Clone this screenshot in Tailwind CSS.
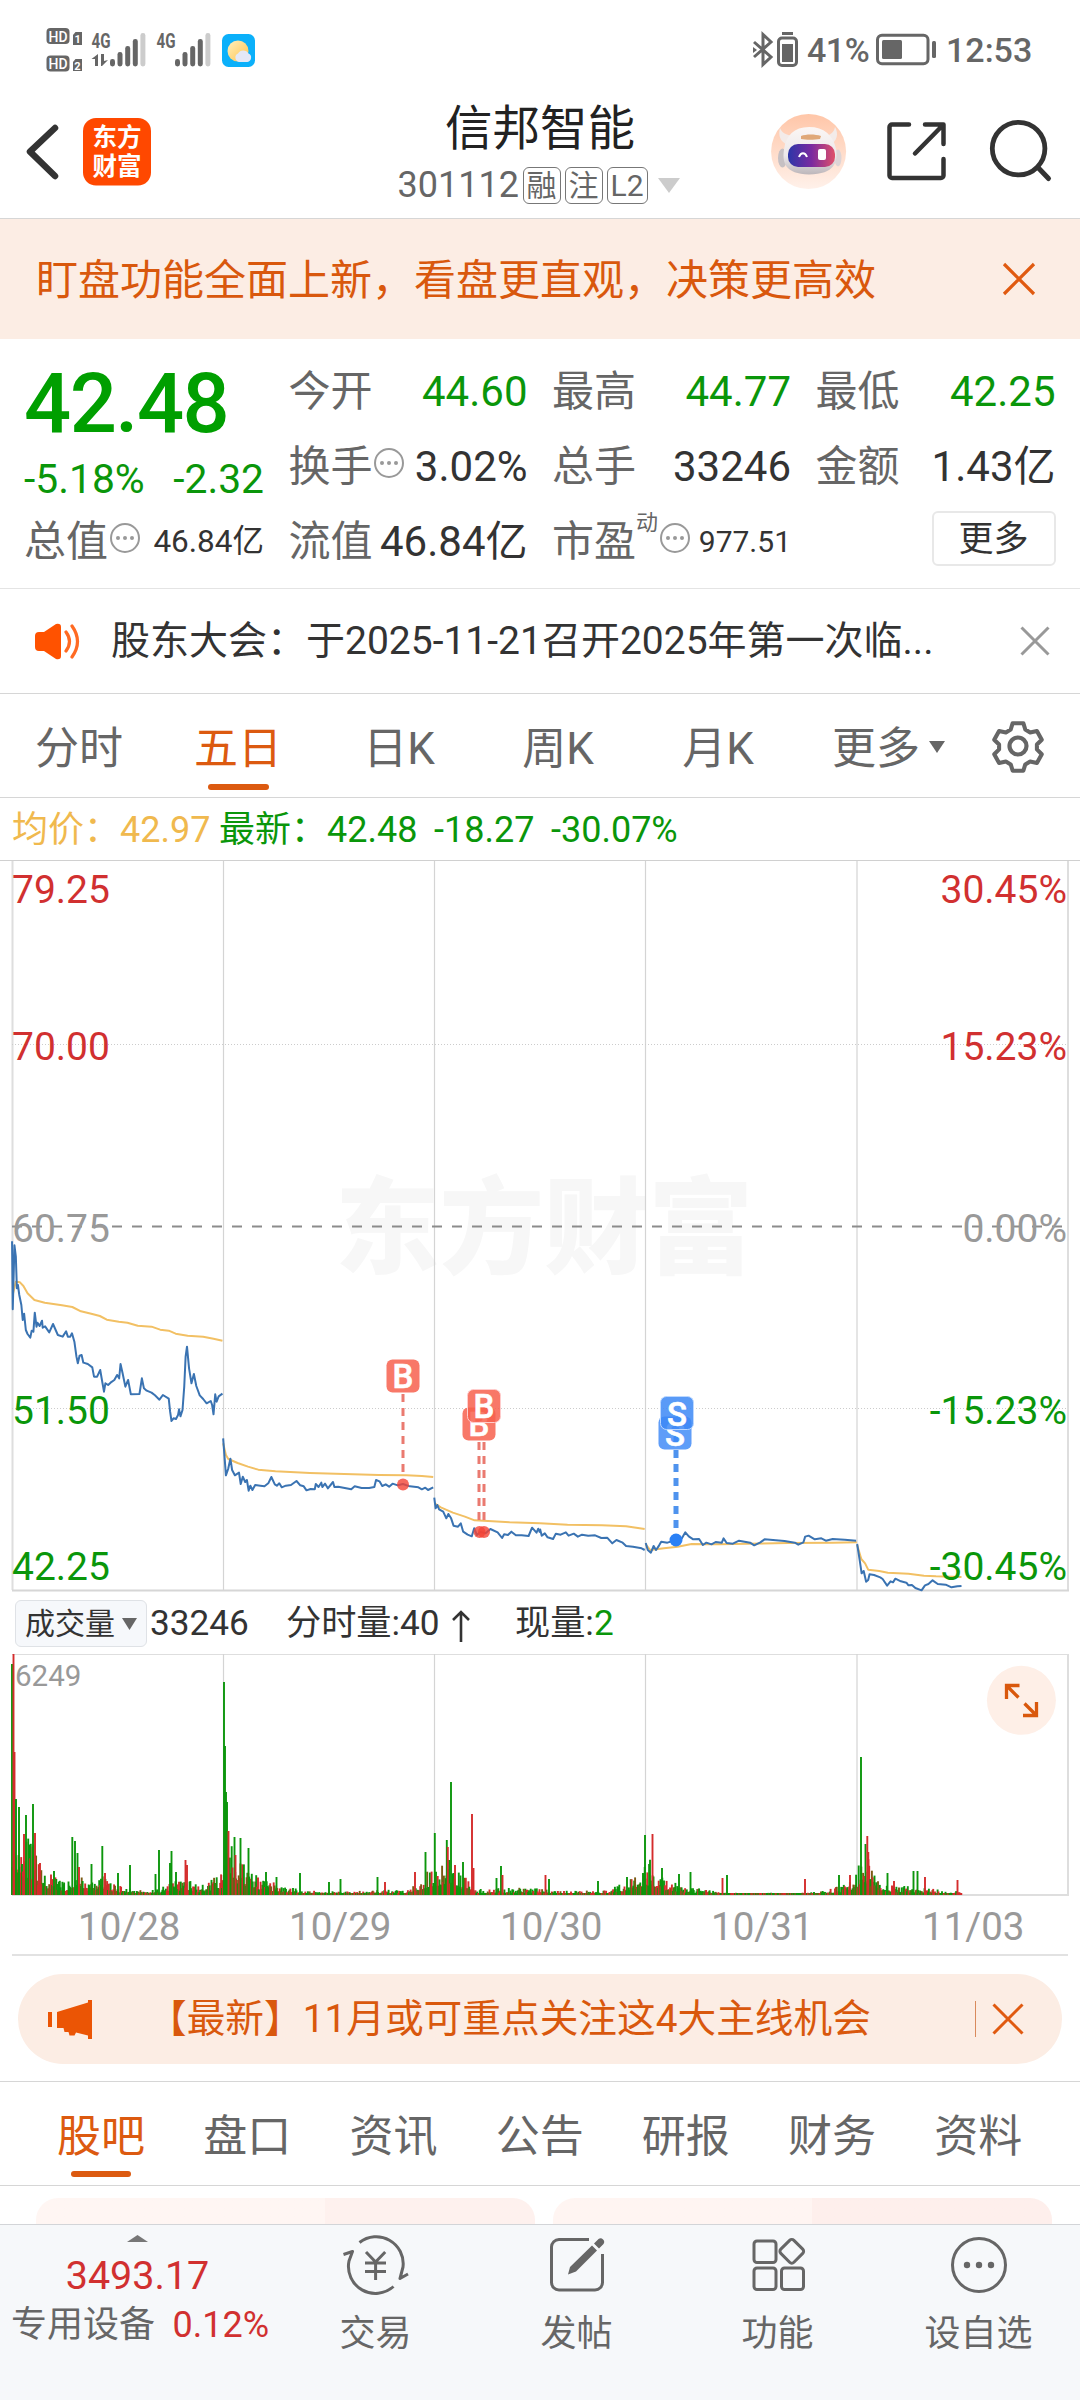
<!DOCTYPE html>
<html lang="zh-CN">
<head>
<meta charset="utf-8">
<title>信邦智能 301112</title>
<script src="https://cdn.jsdelivr.net/npm/@tailwindcss/browser@4"></script>
</head>
<body class="w-[1080px] h-[2400px] overflow-hidden bg-white flex flex-col font-['Roboto','Noto_Sans_CJK_SC',sans-serif] text-[#333] *:shrink-0 whitespace-nowrap">

<!-- status bar -->
<div class="h-[84px] flex justify-between pt-[20px] pl-[40px] pr-[49px]">
  <svg width="230" height="60" viewBox="40 20 230 60" font-family="Roboto" fill="#666">
    <rect x="46.5" y="28" width="23" height="16" rx="4"/><rect x="46.5" y="55.500" width="23" height="16" rx="4"/>
    <text x="48.500" y="41.500" font-size="15" font-weight="500" fill="#fff" textLength="19" lengthAdjust="spacingAndGlyphs">HD</text>
    <text x="48.500" y="69" font-size="15" font-weight="500" fill="#fff" textLength="19" lengthAdjust="spacingAndGlyphs">HD</text>
    <path d="M75.500 32h6.500v13h-9V35z"/><path d="M75.500 59h6.500v12h-9V62z"/>
    <text x="74.500" y="43" font-size="11" font-weight="700" fill="#fff">1</text>
    <text x="74.300" y="69.500" font-size="11" font-weight="700" fill="#fff">2</text>
    <text x="91.500" y="48" font-size="21" font-weight="700" textLength="19" lengthAdjust="spacingAndGlyphs">4G</text>
    <text x="156.500" y="48" font-size="21" font-weight="700" textLength="19" lengthAdjust="spacingAndGlyphs">4G</text>
    <path d="M98 54v12h-3v-7h-3.500zM101 54h3v7l4-1-6 6h-1z"/>
    <g id="sig"><rect x="110" y="59" width="5" height="7.500" rx="2.400"/><rect x="117.500" y="52" width="5" height="14.500" rx="2.400"/><rect x="125.200" y="46" width="5" height="20.500" rx="2.400"/><rect x="132.800" y="39" width="5" height="27.500" rx="2.400"/><rect x="140.400" y="33" width="5" height="33.500" rx="2.400" fill="#ccc"/></g>
    <use href="#sig" x="65"/>
    <defs><linearGradient id="sun" x1="0" y1="0" x2="1" y2="1"><stop offset="0" stop-color="#fff0c0"/><stop offset="1" stop-color="#ffc34a"/></linearGradient></defs>
    <rect x="222" y="34" width="33" height="33" rx="6.500" fill="#0bb0fa"/>
    <circle cx="238" cy="51" r="10.500" fill="url(#sun)"/>
    <path d="M239 62a4.500 4.500 0 0 1-1-8.500 6 6 0 0 1 10.500 0 4.500 4.500 0 0 1-1 8.500z" fill="#e4e8f6"/>
  </svg>
  <div class="flex items-center h-[60px] text-[34px] leading-[60px] font-medium text-[#666]">
    <svg width="50" height="40" viewBox="752 30 50 40" fill="none" stroke="#666">
      <path d="M754 42l17 15-8 7.500v-30l8 7.500-17 15" stroke-width="3"/><path d="M753 47v6l4-3z" fill="#666" stroke="none"/>
      <rect x="778.500" y="38" width="18" height="27.500" rx="3.500" stroke-width="3"/><rect x="782" y="44" width="11" height="18" fill="#666" stroke="none"/><path d="M782 33.500h11" stroke-width="3"/>
    </svg>
    <span class="ml-[5px] w-[64px] tracking-[-0.5px]">41%</span>
    <svg class="ml-[4px]" width="64" height="36" viewBox="876 32 64 36" fill="none" stroke="#666"><rect x="878.500" y="35.300" width="50.500" height="28.500" rx="4.500" stroke-width="3"/><rect x="883" y="40" width="20" height="19" rx="1.500" fill="#666" stroke="none"/><rect x="933" y="41" width="4" height="17" rx="1.500" fill="#666" stroke="none"/></svg>
    <span class="ml-[7px] w-[85px]">12:53</span>
  </div>
</div>

<!-- header -->
<div class="h-[135px] border-b border-[#d6d6d6] flex">
  <svg class="mt-[31px] ml-[20px]" width="140" height="80" viewBox="20 115 140 80">
    <path d="M55 128L30 151.700 55 176" fill="none" stroke="#333" stroke-width="6.500" stroke-linecap="round" stroke-linejoin="round"/>
    <rect x="83" y="118" width="68" height="67.500" rx="13" fill="#ff4800"/>
    <g font-family="Noto Sans CJK SC" font-weight="700" font-size="24.500" fill="#fff"><text x="92.500" y="145.500">东方</text><text x="92.500" y="174.500">财富</text></g>
  </svg>
  <div class="w-[380px] ml-[190px] pt-[16px] flex flex-col items-center">
    <div class="text-[47.500px] leading-[58px] h-[58px] text-[#222]">信邦智能</div>
    <div class="flex items-center h-[50px] text-[36px] leading-[50px] text-[#666] mt-[2px] -ml-[3px]">
      <span class="w-[125px]">301112</span>
      <span class="w-[38px] h-[37px] border border-[#777] rounded-[6px] text-[30px] leading-[35px] text-center">融</span>
      <span class="ml-[4px] w-[38px] h-[37px] border border-[#777] rounded-[6px] text-[30px] leading-[35px] text-center">注</span>
      <span class="ml-[4px] w-[41px] h-[37px] border border-[#777] rounded-[6px] text-[30px] leading-[36px] text-center">L2</span>
      <svg class="ml-[10px]" width="22" height="15"><path d="M0 0h22L11 15z" fill="#ccc"/></svg>
    </div>
  </div>
  <svg class="mt-[26px] ml-[35px]" width="300" height="90" viewBox="765 110 300 90" fill="none">
    <defs>
      <linearGradient id="peach" x1="0" y1="0" x2="0" y2="1"><stop offset="0" stop-color="#ffc6a8"/><stop offset="1" stop-color="#fff1ea"/></linearGradient>
      <linearGradient id="visor"><stop offset="0" stop-color="#2c36a8"/><stop offset=".5" stop-color="#7a2aa0"/><stop offset="1" stop-color="#e0506a"/></linearGradient>
      <linearGradient id="shell" x1="0" y1="0" x2="0" y2="1"><stop offset="0" stop-color="#fbf6f4"/><stop offset=".6" stop-color="#ece8ea"/><stop offset="1" stop-color="#bdb6ba"/></linearGradient>
    </defs>
    <circle cx="808.600" cy="151.500" r="37.500" fill="url(#peach)"/>
    <ellipse cx="782.500" cy="158" rx="4.500" ry="9.500" fill="#c6c0c3"/><ellipse cx="838" cy="158" rx="3.500" ry="8.500" fill="#ddd4d6"/>
    <path d="M780 128c-2 7 0 14 8 17l5-9c-7-1-11-3-13-8zM835 127c4 7 2 14-5 18l-5-9c6-1 9-4 10-9z" fill="#f3ebe9"/>
    <path d="M809 127c15 0 24 8 27 22 2 13-1 25-27 25.500-24-.5-27-12-25-25 2-14 10-22.500 25-22.500z" fill="url(#shell)"/>
    <path d="M801 136c5-2 14-2 20 0l-1 3c-6 1-14 1-19 0z" fill="#e0a878"/>
    <rect x="788" y="144" width="47" height="23" rx="10" fill="url(#visor)"/>
    <path d="M799 157c2-5 6-5 8 0" stroke="#fff" stroke-width="2"/><rect x="818" y="149" width="8" height="11" rx="2" fill="#fff"/>
    <g stroke="#333" stroke-width="4.500" stroke-linecap="round" stroke-linejoin="round">
      <path d="M909 124.500H892a2.500 2.500 0 0 0-2.500 2.500v48.500a2.500 2.500 0 0 0 2.500 2.500h49a2.500 2.500 0 0 0 2.500-2.500V159M925 124.500h18.500V144M943 125l-28 28.500"/>
      <circle cx="1018.600" cy="148.600" r="26.300" stroke-width="4.800"/><path d="M1038 167.500l10.500 11" stroke-width="5"/>
    </g>
  </svg>
</div>

<!-- notice banner -->
<div class="h-[120px] bg-[#fcede4] flex items-center justify-between pl-[36px] pr-[44px] pt-[4px] text-[42px] leading-[60px] text-[#d9580d]">
  <span>盯盘功能全面上新，看盘更直观，决策更高效</span>
  <svg class="mb-[4px]" width="34" height="34" viewBox="0 0 34 34"><path d="M2 2l30 30M32 2L2 32" stroke="#e05a10" stroke-width="3.200"/></svg>
</div>

<!-- quote -->
<div class="h-[250px] border-b border-[#e4e4e4] pt-[15px] px-[24px] grid grid-cols-[240px_239px_239px_240px] gap-x-[24.500px] text-[42px] text-[#333]">
  <div class="h-[225px]">
    <div class="h-[100px] leading-[100px] text-[83px] font-medium text-[#009f00] tracking-[-1.500px]">42.48</div>
    <div class="h-[50px] leading-[50px] text-[40.800px] text-[#0a960a] flex justify-between"><span>-5.18%</span><span>-2.32</span></div>
    <div class="h-[75px] leading-[75px] flex justify-between"><span class="flex items-center text-[#666]">总值<svg class="mb-[7px] ml-[1px]" width="32" height="32" viewBox="-16 -16 32 32"><circle r="14" fill="none" stroke="#999" stroke-width="2"/><g fill="#999"><circle cx="-7" r="2"/><circle r="2"/><circle cx="7" r="2"/></g></svg></span><span class="text-[31.500px]">46.84亿</span></div>
  </div>
  <div class="leading-[75px] *:h-[75px] *:flex *:justify-between">
    <div><span class="text-[#666]">今开</span><span class="text-[#0a960a]">44.60</span></div>
    <div><span class="flex items-center text-[#666]">换手<svg class="mb-[7px]" width="32" height="32" viewBox="-16 -16 32 32"><circle r="14" fill="none" stroke="#999" stroke-width="2"/><g fill="#999"><circle cx="-7" r="2"/><circle r="2"/><circle cx="7" r="2"/></g></svg></span><span>3.02%</span></div>
    <div><span class="text-[#666]">流值</span><span>46.84亿</span></div>
  </div>
  <div class="leading-[75px] *:h-[75px] *:flex *:justify-between">
    <div><span class="text-[#666]">最高</span><span class="text-[#0a960a]">44.77</span></div>
    <div><span class="text-[#666]">总手</span><span>33246</span></div>
    <div><span class="flex items-center text-[#666]">市盈<span class="text-[22px] leading-[30px] mb-[38px]">动</span><svg class="mb-[7px] ml-[1px]" width="32" height="32" viewBox="-16 -16 32 32"><circle r="14" fill="none" stroke="#999" stroke-width="2"/><g fill="#999"><circle cx="-7" r="2"/><circle r="2"/><circle cx="7" r="2"/></g></svg></span><span class="text-[30px]">977.51</span></div>
  </div>
  <div class="leading-[75px] *:h-[75px] *:flex *:justify-between">
    <div><span class="text-[#666]">最低</span><span class="text-[#0a960a]">42.25</span></div>
    <div><span class="text-[#666]">金额</span><span>1.43亿</span></div>
    <div class="items-center"><span></span><span class="w-[124px] h-[55px] mb-[6px] rounded-[6px] border-2 border-[#e8e8e8] text-[35px] leading-[53px] text-center">更多</span></div>
  </div>
</div>

<!-- announcement -->
<div class="h-[105px] border-b border-[#d6d6d6] flex items-center pl-[34px] pr-[30px] pb-[1px] text-[39px] leading-[60px]">
  <svg width="46" height="38" viewBox="33 620 46 38" fill="#ff5200"><path d="M34 634q0-4 4-4h5l12-8q5-1 5 3v29q0 4-5 3l-12-8h-5q-4 0-4-4z"/><path d="M65 630q7 9.500 0 19M71 624q11 15.500 0 31" fill="none" stroke="#ff6a22" stroke-width="3.200" stroke-linecap="round"/></svg>
  <span class="ml-[31px]">股东大会：于2025-11-21召开2025年第一次临...</span>
  <svg class="ml-auto" width="30" height="30" viewBox="0 0 30 30"><path d="M1.500 1.500l27 27M28.500 1.500l-27 27" stroke="#999" stroke-width="3"/></svg>
</div>

<!-- period tabs -->
<div class="h-[104px] border-b border-[#d6d6d6] flex text-[44px] leading-[110px] text-[#666]">
  <div class="w-[158px] text-center">分时</div>
  <div class="w-[160px] text-center text-[#dc5a10] relative">五日<div class="absolute left-[50px] top-[90px] w-[61px] h-[6px] rounded-[3px] bg-[#dc5a10]"></div></div>
  <div class="w-[162px] text-center">日K</div>
  <div class="w-[156px] text-center">周K</div>
  <div class="w-[164px] text-center">月K</div>
  <div class="w-[191px] pl-[32px] flex items-start">更多<svg class="ml-[9px] mt-[47px]" width="16" height="12"><path d="M0 0h16L8 12z" fill="#666"/></svg></div>
  <svg class="mt-[25px]" width="54" height="54" viewBox="-27 -27 54 54" fill="none" stroke="#666" stroke-width="4.200" stroke-linejoin="round"><path d="M-5.500 -23.500h11l2 6.500 5 3 7-1.500 5 9-5 5v5l5 5-5 9-7-1.500-5 3-2 6.500h-11l-2-6.500-5-3-7 1.500-5-9 5-5v-5l-5-5 5-9 7 1.500 5-3z" transform="scale(.97)"/><circle r="8.500"/></svg>
</div>

<!-- legend -->
<div class="h-[62px] flex text-[36px] leading-[64px] pl-[12px] text-[#0a960a]">
  <span class="w-[207px] text-[#f0b94e]">均价：42.97</span><span class="w-[215px]">最新：42.48</span><span class="w-[117px]">-18.27</span><span>-30.07%</span>
</div>

<!-- price chart -->
<svg class="block" width="1080" height="732" viewBox="0 860 1080 732" fill="none" font-family="Roboto">
  <text x="335" y="1265" font-family="Noto Sans CJK SC" font-weight="900" font-size="104.500" fill="#f7f7f7">东方财富</text>
  <path d="M0 860.500H1080" stroke="#d0d0d0"/>
  <path d="M223.500 861V1590M434.500 861V1590M645.500 861V1590M857 861V1590" stroke="#d4d4d4" stroke-width="1.200"/>
  <path d="M12.500 861V1590M1068 861V1590" stroke="#dedede" stroke-width="2"/>
  <path d="M12 1590.500H1069" stroke="#d6d6d6" stroke-width="2"/>
  <path d="M12 1044.500H1068M12 1408.500H1068" stroke="#ccc" stroke-width="1" stroke-dasharray="1 2"/>
  <path d="M12 1226.500H1068" stroke="#8c8c8c" stroke-width="2" stroke-dasharray="10 10"/>
  <g stroke-width="2" stroke-linejoin="round">
    <g transform="translate(0 1160) scale(.34437 .33333)">
      <g stroke="#f2c064">
        <path vector-effect="non-scaling-stroke" d="M38 400L46 365 58 367 68 378 80 400 100 420 130 428 180 436 210 441 235 454 265 461 290 468 310 479 345 485 370 488 400 497 440 500 465 509 490 512 510 521 545 527 590 530 620 536 646 542"/>
        <path vector-effect="non-scaling-stroke" d="M648 850L656 885 663 897 690 909 720 920 750 929 800 934 900 939 1000 942 1100 945 1180 946 1225 948 1258 951"/>
        <path vector-effect="non-scaling-stroke" d="M1262 1030L1280 1042 1315 1058 1350 1070 1378 1081 1430 1084 1480 1087 1568 1090"/>
      </g>
      <g stroke="#3a73b2">
        <path vector-effect="non-scaling-stroke" d="M35 244L37 448 42 256 46 290 49 385 52 375 56 405 62 435 66 480 70 461 75 510 80 522 88 533 92 512 97 515 101 458 106 500 109 488 115 498 122 482 124 503 131 499 143 517 154 492 168 525 182 530 192 514 197 530 204 530 209 520 216 545 222 590 226 610 231 587 237 585 242 608 255 612 268 622 273 650 282 650 291 630 296 660 302 695 306 670 314 675 321 668 332 660 340 645 346 655 350 612 356 640 364 680 372 660 380 703 405 702 412 655 418 685 426 692 440 698 450 706 463 719 473 705 490 716 494 755 498 783 504 775 511 777 517 765 520 748 524 769 530 750 535 680 539 590 543 560 549 625 556 670 563 642 570 678 580 706 590 717 600 730 612 723 616 735 620 763 625 703 629 725 635 709 646 701"/>
        <path vector-effect="non-scaling-stroke" d="M648 835L652 890 656 946 663 925 669 896 674 930 682 946 694 938 699 972 705 950 712 966 717 960 722 992 727 977 733 990 741 975 756 977 768 979 779 970 788 951 798 973 804 977 811 970 818 982 830 977 845 975 861 963 872 976 882 979 890 991 902 987 914 988 917 972 925 981 933 968 936 981 944 971 952 985 960 975 967 966 971 981 982 980 1005 985 1020 988 1030 979 1050 984 1072 984 1087 981 1092 960 1102 964 1110 978 1120 973 1130 980 1140 971 1155 976 1170 972 1190 979 1215 982 1225 988 1235 983 1243 990 1258 982"/>
        <path vector-effect="non-scaling-stroke" d="M1261 1013L1265 1045 1270 1035 1275 1048 1287 1055 1296 1075 1302 1062 1310 1075 1317 1097 1330 1100 1338 1090 1345 1115 1358 1124 1370 1129 1377 1105 1385 1125 1395 1116 1410 1120 1424 1107 1445 1117 1458 1134 1464 1123 1475 1125 1485 1115 1498 1126 1515 1126 1535 1128 1545 1103 1558 1118 1563 1106 1568 1118"/>
      </g>
    </g>
    <g transform="translate(540 1160) scale(.34437 .33333)">
      <g stroke="#f2c064">
        <path vector-effect="non-scaling-stroke" d="M0 1090L80 1094 180 1096 250 1099 304 1107"/>
        <path vector-effect="non-scaling-stroke" d="M307 1153L320 1170 360 1165 400 1160 440 1152 520 1153 600 1151 720 1149 850 1148 920 1147"/>
        <path vector-effect="non-scaling-stroke" d="M921 1155L933 1197 944 1210 953 1229 985 1233 1010 1238 1070 1241 1115 1247 1150 1249 1224 1251"/>
      </g>
      <g stroke="#3a73b2">
        <path vector-effect="non-scaling-stroke" d="M0 1106L5 1127 14 1120 22 1132 38 1137 46 1121 60 1124 75 1117 83 1127 98 1121 110 1130 122 1124 140 1127 160 1126 178 1134 195 1133 210 1150 222 1140 240 1148 250 1158 270 1160 295 1165 304 1170"/>
        <path vector-effect="non-scaling-stroke" d="M307 1149L313 1170 322 1178 330 1158 337 1170 346 1156 352 1145 370 1148 395 1140 412 1135 422 1117 432 1129 445 1138 462 1137 473 1155 483 1148 498 1153 510 1146 528 1148 533 1135 542 1149 560 1151 578 1142 610 1148 622 1156 640 1147 652 1138 685 1141 710 1143 740 1148 750 1154 765 1147 770 1130 780 1127 798 1138 817 1135 830 1142 850 1137 885 1139 918 1142"/>
        <path vector-effect="non-scaling-stroke" d="M921 1152L928 1198 934 1240 940 1233 947 1265 953 1260 957 1243 970 1245 988 1252 995 1257 1008 1277 1018 1264 1025 1267 1032 1256 1048 1264 1064 1268 1070 1276 1080 1275 1090 1284 1108 1291 1118 1276 1128 1272 1140 1261 1155 1272 1178 1274 1195 1282 1212 1279 1224 1278"/>
      </g>
    </g>
  </g>
  <!-- trade markers -->
  <g stroke="#ea7a70" stroke-width="3" stroke-dasharray="8 6"><path d="M403 1394V1478M479 1442V1526M484 1442V1526"/></g>
  <path d="M676 1436V1534" stroke="#4f93ee" stroke-width="5" stroke-dasharray="8 6"/>
  <g fill="#f44336" fill-opacity=".8"><circle cx="403" cy="1484.500" r="6"/><circle cx="479.500" cy="1532" r="6"/><circle cx="484" cy="1532" r="6"/></g>
  <circle cx="676" cy="1540" r="6.500" fill="#2a80f5"/>
  <g font-size="33" font-weight="500" text-anchor="middle" stroke-width=".6">
    <g fill="#f7604e" fill-opacity=".85"><rect x="386.500" y="1359.500" width="33" height="33" rx="6"/><rect x="462.500" y="1407.500" width="33" height="33" rx="6"/></g>
    <text x="403" y="1388" fill="#fff" stroke="#fff">B</text><text x="479" y="1436" fill="#fff" stroke="#fff">B</text>
    <rect x="467.500" y="1389.500" width="33" height="33" rx="6" fill="#f7604e" fill-opacity=".85" stroke="#fcc" stroke-width="1"/><text x="484" y="1417.500" fill="#fff" stroke="#fff">B</text>
    <rect x="658.500" y="1416.500" width="33" height="33" rx="6" fill="#3c88f6" fill-opacity=".82"/><text x="675" y="1446" fill="#fff" stroke="#fff">S</text>
    <rect x="660.500" y="1396.500" width="33" height="33" rx="6" fill="#3c88f6" fill-opacity=".85" stroke="#bcd8ff" stroke-width="1"/><text x="677" y="1425.500" fill="#fff" stroke="#fff">S</text>
  </g>
  <g font-size="39">
    <g fill="#d13030"><text x="12" y="902.500">79.25</text><text x="12" y="1060">70.00</text><g text-anchor="end"><text x="1067" y="902.500">30.45%</text><text x="1067" y="1060">15.23%</text></g></g>
    <g fill="#999"><text x="12" y="1241.500">60.75</text><text x="1067" y="1241.500" text-anchor="end">0.00%</text></g>
    <g fill="#0a960a"><text x="12" y="1423.700">51.50</text><text x="12" y="1579.700">42.25</text><g text-anchor="end"><text x="1067" y="1423.700">-15.23%</text><text x="1067" y="1579.700">-30.45%</text></g></g>
  </g>
</svg>

<!-- volume header -->
<div class="h-[62px] flex text-[35.200px] leading-[63px] pl-[15px]">
  <div class="mt-[8px] w-[132px] h-[47px] rounded-[6px] bg-[#f6f8fb] border border-[#dfe2e6] pl-[9px] flex items-center text-[30px] leading-[46px]">成交量<svg class="ml-[7px]" width="15" height="12"><path d="M0 0h15L7.500 12z" fill="#666"/></svg></div>
  <span class="ml-[3px] w-[136px]">33246</span>
  <span class="w-[163px]">分时量:40</span>
  <svg class="mt-[18px] w-[66px]" width="66" height="34" viewBox="0 0 66 34"><path d="M12 32V2M4 10l8-8 8 8" fill="none" stroke="#333" stroke-width="2.600"/></svg>
  <span>现量:<span class="text-[#0a960a]">2</span></span>
</div>

<!-- volume chart -->
<svg class="block" width="1080" height="242" viewBox="0 1654 1080 242" fill="none" font-family="Roboto">
  <path d="M12 1654.500H1068" stroke="#dedede"/><path d="M12 1895H1069" stroke="#dedede" stroke-width="2"/>
  <path d="M223.500 1654V1895M434.500 1654V1895M645.500 1654V1895M857 1654V1895" stroke="#d4d4d4" stroke-width="1.200"/><path d="M1068 1654V1895" stroke="#dedede" stroke-width="2"/>
  <g id="bars" stroke-width="1.900"></g>
  <text x="15" y="1685.700" font-size="29.500" fill="#999">6249</text>
  <circle cx="1021.400" cy="1700.300" r="34.500" fill="#feefe7"/>
  <path d="M1019.500 1685.500H1006.500V1699M1007 1686L1018.500 1697.500M1023 1715.500h13.500V1702M1036 1715L1024.500 1703.500" stroke="#d9580d" stroke-width="3.300"/>
</svg>

<!-- dates -->
<div class="h-[60px] mx-[12px] border-b-2 border-[#e2e2e2] flex text-[38.500px] leading-[61px] text-[#999] *:w-[211px] *:pl-[66px]">
  <span>10/28</span><span>10/29</span><span>10/30</span><span>10/31</span><span>11/03</span>
</div>

<!-- promo -->
<div class="h-[126px] border-b border-[#d6d6d6] px-[18px] pt-[18px]">
  <div class="h-[90px] rounded-full bg-[#fcede4] flex items-center pl-[29px] text-[38.700px] leading-[90px] text-[#d9580d]">
    <svg width="48" height="40" viewBox="47 1998 48 40" fill="#eb5505"><path d="M48 2011h4v15h-4zM57 2011L88 2001.500V1999h4v39h-4v-3.500l-12-3-1.500 3h-5l-1-3.500h-4l-1-4H57z"/></svg>
    <span class="ml-[53px]">【最新】11月或可重点关注这4大主线机会</span>
    <div class="ml-auto w-[1.500px] h-[36px] bg-[#d98a5c]"></div>
    <svg class="ml-[16px] mr-[38px]" width="32" height="32"><path d="M1.500 1.500l29 29M30.500 1.500l-29 29" stroke="#e05a10" stroke-width="3"/></svg>
  </div>
</div>

<!-- content tabs -->
<div class="h-[104px] border-b border-[#d6d6d6] flex text-[44px] leading-[111px] text-[#666] pl-[28px] *:w-[146.200px] *:text-center">
  <div class="relative text-[#dc5a10]">股吧<div class="absolute left-[43px] top-[89px] w-[60px] h-[6px] rounded-[3px] bg-[#dc5a10]"></div></div>
  <div>盘口</div><div>资讯</div><div>公告</div><div>研报</div><div>财务</div><div>资料</div>
</div>
<div class="h-[38px] pt-[12px] pl-[36px] flex gap-[18px] overflow-hidden">
  <div class="w-[499px] h-[80px] rounded-[22px] bg-linear-to-r from-[#fff6f3] from-58% to-[#fef1ee] to-58%"></div>
  <div class="w-[499px] h-[80px] rounded-[22px] bg-linear-to-r from-[#fff5f2] from-52% to-[#feefec] to-52%"></div>
</div>

<!-- bottom bar -->
<div class="h-[177px] bg-[#f6f8fa] border-t border-[#d3d5d8] flex text-[36px] text-[#666]">
  <div class="w-[275px] flex flex-col items-center">
    <svg class="mt-[10px]" width="21" height="7"><path d="M0 7L10.500 0 21 7z" fill="#777"/></svg>
    <div class="text-[39.500px] h-[60px] leading-[68px] text-[#d13030]">3493.17</div>
    <div class="flex items-center justify-between w-[258px] ml-[5px] leading-[47px]"><span class="text-[36px]">专用设备</span><span class="text-[#d13030]">0.12%</span></div>
  </div>
  <div class="w-[201px] flex flex-col items-center">
    <svg class="mt-[7px]" width="70" height="66" viewBox="341 2231 70 66" fill="none" stroke="#666" stroke-width="3" stroke-linejoin="round"><path d="M359.500 2241.500A27 27 0 0 1 403 2266L400 2277.500 408 2273M393.500 2285.500A27 27 0 0 1 349 2260L352.500 2250.500 343.500 2253.500"/><path d="M366 2251l9.600 10 9.600-10M375.600 2261v18M365 2262h21M365 2270.500h21"/></svg>
    <div class="leading-[72px]">交易</div>
  </div>
  <div class="w-[201px] flex flex-col items-center">
    <svg class="mt-[7px]" width="70" height="66" viewBox="542 2231 70 66" fill="none" stroke="#666" stroke-width="3"><path d="M589 2238.500H559a7.500 7.500 0 0 0-7.500 7.500v35.500a7.500 7.500 0 0 0 7.500 7.500h36a7.500 7.500 0 0 0 7.500-7.500V2253"/><g fill="#666" stroke="none"><path d="M592 2244.500l5 5-21 21-8 3 2-7.500zM594 2242.500l4.500-4.500a3.600 3.600 0 0 1 5 5l-4.500 4.500z"/></g></svg>
    <div class="leading-[72px]">发帖</div>
  </div>
  <div class="w-[201px] flex flex-col items-center">
    <svg class="mt-[7px]" width="70" height="66" viewBox="743 2231 70 66" fill="none" stroke="#666" stroke-width="3"><rect x="754" y="2240" width="22" height="21.500" rx="3"/><rect x="754" y="2267" width="22" height="21.500" rx="3"/><rect x="781.500" y="2267" width="22" height="21.500" rx="3"/><rect x="782.500" y="2241" width="18.500" height="18.500" rx="3" transform="rotate(45 791.700 2250.300)"/></svg>
    <div class="leading-[72px]">功能</div>
  </div>
  <div class="w-[201px] flex flex-col items-center">
    <svg class="mt-[7px]" width="70" height="66" viewBox="-35 -33 70 66"><circle r="26.500" fill="none" stroke="#666" stroke-width="3"/><g fill="#666"><circle cx="-12" r="3.200"/><circle r="3.200"/><circle cx="12" r="3.200"/></g></svg>
    <div class="leading-[72px]">设自选</div>
  </div>
</div>

<script>
// One bar per traded minute: envelope gives the usual level, peaks the single large trades.
const base = 1895;
const env = [[12,95],[18,70],[26,58],[34,45],[40,26],[52,18],[70,12],[80,22],[90,12],[104,20],[115,9],[150,4],[165,9],[185,16],[200,8],[222,22],[226,90],[236,40],[250,26],[260,16],[285,8],[310,4],[370,4],[405,6],[418,14],[433,26],[445,36],[455,26],[468,16],[478,6],[540,7],[556,4],[600,4],[620,10],[640,20],[650,34],[662,18],[680,9],[700,6],[725,2],[800,2],[825,4],[845,10],[857,20],[862,50],[870,30],[880,15],[895,9],[920,7],[945,5],[962,3]];
const peaks = [[12,231,'g'],[13.5,241,'r'],[14.5,143,'r'],[16,96,'g'],[19,88,'g'],[24,61,'r'],[26,80,'g'],[33,91,'g'],[35,62,'r'],[40,32,'r'],[54,24,'g'],[72.3,58,'g'],[75,54,'g'],[77.5,42,'g'],[79,28,'r'],[91.5,31,'g'],[102.3,49,'g'],[105,22,'r'],[118,22,'g'],[130,30,'g'],[155.5,21,'g'],[159,45,'g'],[170,32,'g'],[171.5,44,'g'],[176,23,'g'],[185.5,35,'r'],[187,30,'r'],[224,213,'g'],[225,149,'g'],[226,103,'g'],[227,93,'g'],[228.5,64,'r'],[234.5,58,'g'],[240.5,57,'g'],[235.5,40,'r'],[248.5,47,'g'],[266,23,'g'],[276.5,18,'g'],[300,22,'g'],[329,13,'g'],[340.500,16,'g'],[377.500,18,'g'],[385,13,'r'],[415,23,'r'],[425.500,43,'g'],[434.800,62,'g'],[446.800,55,'g'],[447.800,48,'r'],[451,113,'g'],[455,30,'r'],[463,33,'g'],[472,81,'r'],[473.500,27,'r'],[496.500,17,'g'],[501,29,'g'],[502.500,20,'r'],[545.500,20,'r'],[549,16,'g'],[598,14,'g'],[627,18,'g'],[645,60,'g'],[652.500,61,'r'],[662,27,'g'],[679,21,'g'],[690.500,23,'g'],[722.500,17,'r'],[727,20,'g'],[805,16,'r'],[839,20,'g'],[850,20,'r'],[861,138,'g'],[865.500,51,'g'],[867.300,59,'r'],[868.300,43,'r'],[887.500,22,'g'],[894,14,'r'],[913.500,24,'g'],[917.500,24,'g'],[925,18,'r'],[957.500,15,'r']];
const color = {g: '#0c960c', r: '#d42c2c', m: '#7a5a14'};
let seed = 11;
const rnd = () => (seed = (seed * 16807) % 2147483647) / 2147483647;
let out = '';
const bar = (x, h, c) => { out += `<path d="M${x.toFixed(1)} ${base}v-${h.toFixed(1)}" stroke="${color[c]}"/>`; };
for (let x = 12.4, i = 0; x < 962; x += 0.877) {
  while (i < env.length - 2 && env[i + 1][0] < x) i++;
  const [x0, h0] = env[i], [x1, h1] = env[i + 1];
  const level = h0 + (h1 - h0) * (x - x0) / (x1 - x0);
  const k = rnd(), t = rnd();
  bar(x, Math.max(2, level * (0.3 + 0.8 * k * k)), t < 0.5 ? 'g' : t < 0.82 ? 'r' : 'm');
}
peaks.forEach(([x, h, c]) => bar(x, h, c));
document.getElementById('bars').innerHTML = out;
</script>
</body>
</html>
